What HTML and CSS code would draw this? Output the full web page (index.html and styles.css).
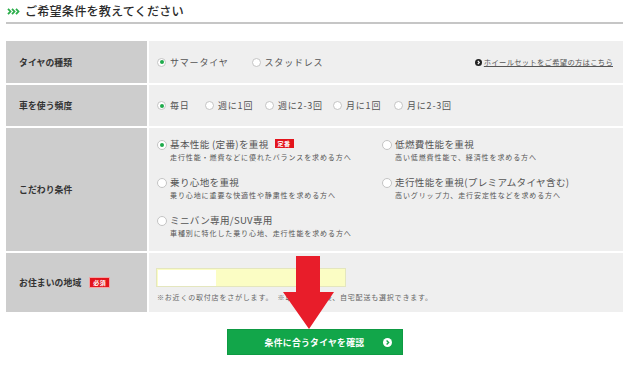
FILE: index.html
```html
<!DOCTYPE html>
<html lang="ja">
<head>
<meta charset="utf-8">
<link rel="stylesheet" href="styles.css">
</head>
<body>
<div class="page">
  <h2 class="heading">
    <svg class="heading-icon" width="13" height="7" viewBox="0 0 13 7"><polyline points="1,0.8 3.5,3.5 1,6.2" /><polyline points="5,0.8 7.5,3.5 5,6.2" /><polyline points="9,0.8 11.5,3.5 9,6.2" /></svg>
    ご希望条件を教えてください
  </h2>

  <div class="form">
    <div class="label row1">タイヤの種類</div>
    <div class="value row1 spread">
      <div class="choices">
        <span class="opt"><span class="radio on"></span>サマータイヤ</span>
        <span class="opt"><span class="radio"></span>スタッドレス</span>
      </div>
      <a class="link"><svg class="link-icon" width="7" height="7" viewBox="0 0 7 7"><circle cx="3.5" cy="3.5" r="3.5"/><polyline points="2.8,1.9 4.3,3.5 2.8,5.1"/></svg>ホイールセットをご希望の方はこちら</a>
    </div>

    <div class="label row2">車を使う頻度</div>
    <div class="value row2">
      <div class="choices freq">
        <span class="opt"><span class="radio on"></span>毎日</span>
        <span class="opt"><span class="radio"></span>週に1回</span>
        <span class="opt"><span class="radio"></span>週に2-3回</span>
        <span class="opt"><span class="radio"></span>月に1回</span>
        <span class="opt"><span class="radio"></span>月に2-3回</span>
      </div>
    </div>

    <div class="label row3">こだわり条件</div>
    <div class="value row3">
      <div class="prefs">
        <div class="pref">
          <div class="pref-main"><span class="radio on"></span>基本性能 (定番)を重視<span class="tag">定番</span></div>
          <div class="pref-sub">走行性能・燃費などに優れたバランスを求める方へ</div>
        </div>
        <div class="pref">
          <div class="pref-main"><span class="radio"></span>低燃費性能を重視</div>
          <div class="pref-sub">高い低燃費性能で、経済性を求める方へ</div>
        </div>
        <div class="pref">
          <div class="pref-main"><span class="radio"></span>乗り心地を重視</div>
          <div class="pref-sub">乗り心地に重要な快適性や静粛性を求める方へ</div>
        </div>
        <div class="pref">
          <div class="pref-main"><span class="radio"></span>走行性能を重視(プレミアムタイヤ含む)</div>
          <div class="pref-sub">高いグリップ力、走行安定性などを求める方へ</div>
        </div>
        <div class="pref">
          <div class="pref-main"><span class="radio"></span>ミニバン専用/SUV専用</div>
          <div class="pref-sub">車種別に特化した乗り心地、走行性能を求める方へ</div>
        </div>
      </div>
    </div>

    <div class="label row4">お住まいの地域<span class="required">必須</span></div>
    <div class="value row4 stack">
      <div class="input"><span class="mask"></span></div>
      <p class="note">※お近くの取付店をさがします。　※取付店入力後、自宅配送も選択できます。</p>
    </div>
  </div>

  <div class="actions">
    <button class="submit">条件に合うタイヤを確認<svg class="submit-icon" width="9" height="9" viewBox="0 0 9 9"><circle cx="4.5" cy="4.5" r="4.5"/><polyline points="3.6,2.5 5.6,4.5 3.6,6.5"/></svg></button>
  </div>

  <svg class="arrow" width="52" height="74" viewBox="0 0 52 74"><polygon points="13,0 37,0 37,36 51,36 26,73 0,36 13,36"/></svg>
</div>
</body>
</html>
```

FILE: styles.css
```css
* { box-sizing: border-box; }
html, body { margin: 0; padding: 0; background: #fff; }
body {
  font-family: "Noto Sans CJK JP", "Noto Sans", sans-serif;
  color: #444;
  width: 640px;
  height: 367px;
  overflow: hidden;
}
.page {
  position: relative;
  padding: 0 17px 0 6px;
}
.heading {
  margin: 0;
  height: 24px;
  padding: 4px 0 4px 1px;
  font-size: 12.2px;
  font-weight: 500;
  color: #2c2c2c;
  line-height: 16px;
  letter-spacing: 0.1px;
  display: flex;
  align-items: center;
  border-bottom: 2px solid #c6c6c6;
}
.heading-icon {
  fill: none;
  stroke: #2aad4a;
  stroke-width: 1.8;
  margin-right: 5px;
}
.form {
  margin-top: 17px;
  display: grid;
  grid-template-columns: 141px 1fr;
  gap: 2px;
}
.label {
  background: #cdcdcd;
  font-size: 8.8px;
  font-weight: bold;
  color: #333;
  letter-spacing: 0.1px;
  padding-left: 13px;
  display: flex;
  align-items: center;
}
.value {
  background: #efefef;
  padding-left: 8px;
  display: flex;
  align-items: center;
}
.row1 { height: 42px; }
.row2 { height: 41px; }
.row3 { height: 123px; }
.row4 { height: 59px; }
.spread { justify-content: space-between; padding-right: 10px; }
.choices {
  display: flex;
  font-size: 9px;
  color: #555;
  letter-spacing: 0.8px;
}
.opt {
  display: flex;
  align-items: center;
  margin-right: 23px;
}
.freq .opt { margin-right: 0; }
.freq .opt:nth-child(1) { width: 48px; }
.freq .opt:nth-child(2) { width: 60px; }
.freq .opt:nth-child(3) { width: 68px; }
.freq .opt:nth-child(4) { width: 61px; }
.radio {
  width: 9px;
  height: 9px;
  border: 1px solid #c4c4c4;
  border-radius: 50%;
  background: #fff;
  margin-right: 4px;
  flex: none;
  display: inline-flex;
  align-items: center;
  justify-content: center;
}
.radio.on::after {
  content: "";
  width: 4px;
  height: 4px;
  border-radius: 50%;
  background: #1eaa4b;
}
.link {
  font-size: 7.3px;
  color: #555;
  text-decoration: underline;
  letter-spacing: 0.3px;
  display: flex;
  align-items: center;
}
.link-icon { margin-right: 2px; }
.link-icon circle { fill: #222; }
.link-icon polyline, .submit-icon polyline {
  fill: none;
  stroke: #fff;
  stroke-width: 1.2;
}
.prefs {
  display: grid;
  grid-template-columns: 225px 1fr;
  row-gap: 12px;
  align-self: flex-start;
  padding-top: 10px;
}
.pref-main {
  font-size: 9.6px;
  color: #555;
  line-height: 13px;
  height: 13px;
  display: flex;
  align-items: center;
  letter-spacing: 0.3px;
}
.pref-main .radio { width: 10px; height: 10px; margin-right: 3px; }
.pref-sub {
  font-size: 7px;
  color: #555;
  line-height: 13px;
  padding-left: 13px;
  letter-spacing: 0.9px;
}
.tag, .required {
  display: inline-block;
  background: #e3141c;
  color: #fff;
  font-size: 6px;
  line-height: 9px;
  padding: 0 3px;
  letter-spacing: 0.5px;
  font-weight: bold;
}
.tag { margin-left: 6px; margin-top: -3px; }
.required { margin-left: 8px; border: 1px solid #f3a3a3; padding: 0 3px; }
.stack {
  flex-direction: column;
  align-items: flex-start;
  justify-content: flex-start;
  padding-top: 15px;
  padding-left: 7px;
}
.input {
  width: 190px;
  height: 19px;
  background: #fbfdc4;
  border: 1px solid #e4e6be;
  padding: 1px 0 0 1px;
}
.mask {
  display: block;
  width: 58px;
  height: 16px;
  background: #fff;
}
.note {
  margin: 4px 0 0 1px;
  font-size: 7px;
  line-height: 12px;
  color: #666;
  letter-spacing: 0.8px;
}
.actions {
  display: flex;
  justify-content: center;
  margin-top: 17px;
}
.submit {
  width: 176px;
  height: 26px;
  background: #12a64a;
  border: 1px solid #0e9a43;
  color: #fff;
  font-family: inherit;
  font-size: 8.8px;
  font-weight: bold;
  letter-spacing: 0.3px;
  display: flex;
  align-items: center;
  justify-content: center;
  position: relative;
  padding: 0;
}
.submit-icon {
  position: absolute;
  right: 10px;
  top: 8px;
}
.submit-icon circle { fill: #fff; }
.submit-icon polyline { stroke: #12a64a; stroke-width: 1.4; }
.arrow {
  position: absolute;
  left: 283px;
  top: 256px;
  fill: #e81d2a;
}
```
